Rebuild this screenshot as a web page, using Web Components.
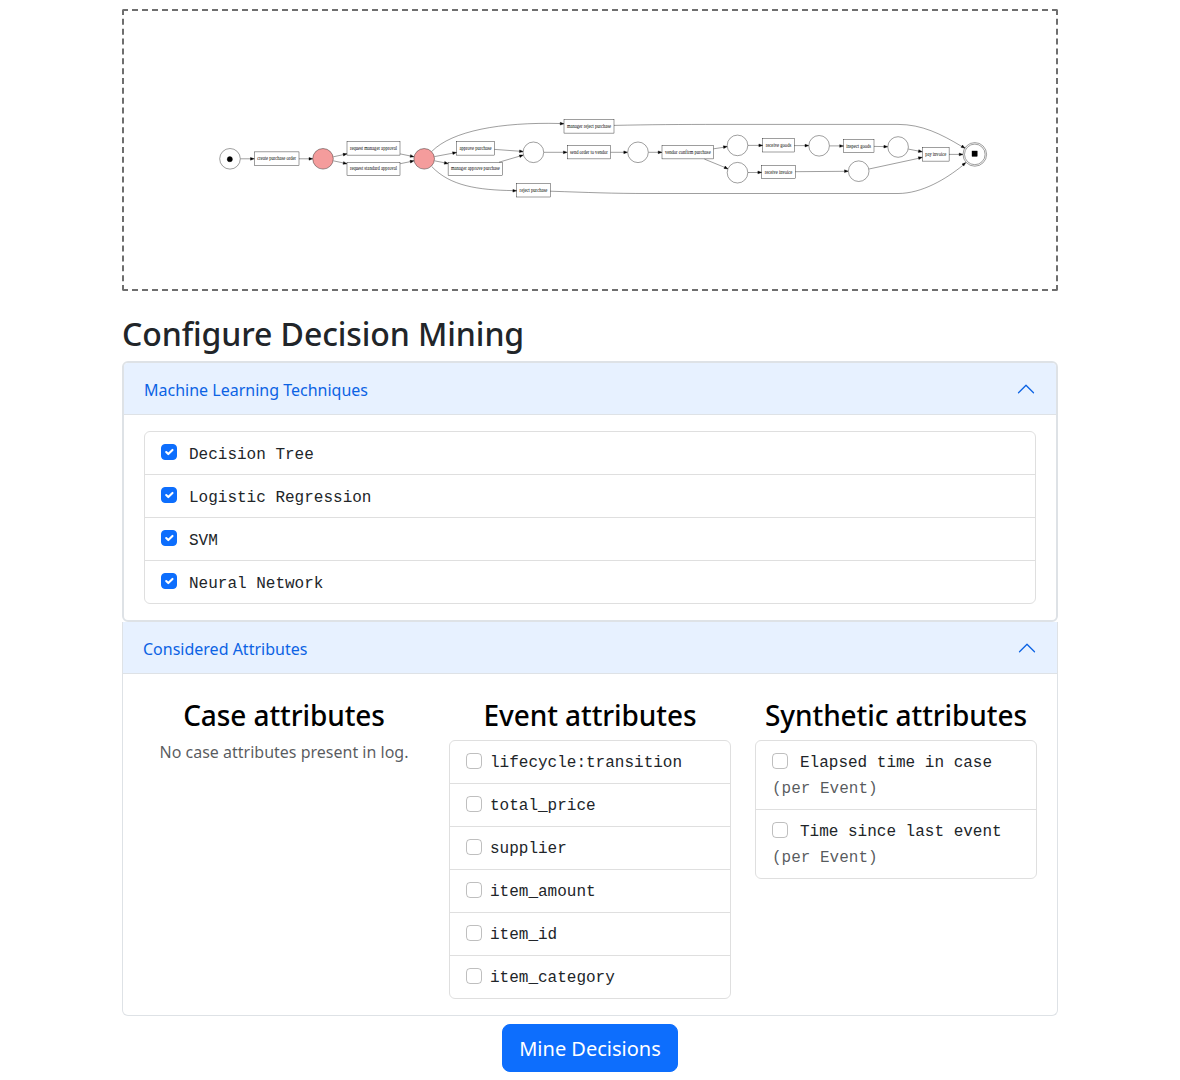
<!DOCTYPE html>
<html lang="en">
<head>
<meta charset="utf-8">
<title>Decision Mining</title>
<style>
html,body{margin:0;background:#fff}
body{font:16px/1.5 "Noto Sans",sans-serif;color:#212529;height:1080px;overflow:hidden}
</style>
</head>
<body>
<decision-app></decision-app>
<script>
const define = (name, html, setup) => customElements.define(name, class extends HTMLElement {
  constructor() {
    super();
    this.attachShadow({mode: 'open'});
  }
  connectedCallback() {
    const t = document.createElement('template');
    t.innerHTML = html;
    this.shadowRoot.replaceChildren(t.content.cloneNode(true));
    if (setup) setup(this, this.shadowRoot);
  }
});

/* Petri net: places [cx, cy, fill], transitions [x1, x2, y, label], arcs [path, arrow tip x, tip y, angle] */
const places = [
  [230,158.8,'#fff'],[323,158.8,'#f49c9c'],[424.2,158.8,'#f49c9c'],[533.4,152.3,'#fff'],[638,152.3,'#fff'],
  [737.5,145.4,'#fff'],[737.5,172.7,'#fff'],[819.1,145.8,'#fff'],[858.7,171.2,'#fff'],[898.1,147,'#fff']
];
const transitions = [
  [254.3,299,151.9,'create purchase order'],[347,400,141.8,'request manager approval'],
  [347,400,162.2,'request standard approval'],[564,614,119.8,'manager reject purchase'],
  [456.5,494.5,141.8,'approve purchase'],[448.1,502.7,162.2,'manager approve purchase'],
  [516.7,550.3,183.7,'reject purchase'],[567.2,610.7,145.6,'send order to vendor'],
  [662,713.6,145.6,'vendor confirm purchase'],[762.8,794.2,138.7,'receive goods'],
  [761.8,795.3,165.3,'receive invoice'],[843.3,874,139.4,'inspect goods'],[922.3,949.1,147.8,'pay invoice']
];
const arcs = [
  ['M240.5 158.8H251',254.3,158.8,0],['M299 158.8H309',312.8,158.8,0],
  ['M333.3 156.8L343.6 154.6',347,153.8,-13],['M333.3 160.8L343.6 163',347,163.8,13],
  ['M400.2 153.9L410.5 156',414,156.8,13],['M400.2 163.7L410.5 161.6',414,160.8,-13],
  ['M432 151.2C452 131 500 122 560 123.5',564,123.8,2],
  ['M434.4 156.6L452.8 153.2',456.5,152.5,-10],['M434.4 160.8L444.6 162.8',448.2,163.6,12],
  ['M431.8 166.6C450 186 478 190 513 190.6',516.7,190.8,1],
  ['M494.5 149.4L519.5 151.2',523.3,151.6,5],['M499 162.2L519.5 156.2',523.3,155.1,-17],
  ['M543.8 152.3H563.5',567.2,152.3,0],['M610.7 152.3H624',627.6,152.3,0],
  ['M648.5 152.3H658.3',662,152.3,0],['M713.6 148.8L723.6 147.3',727.3,146.6,-8],
  ['M704.4 159.1L724.5 167.3',728,168.9,26],['M748 145.4H759',762.7,145.4,0],
  ['M748 172.5H758',761.7,172.4,0],['M794.2 145.6H805',808.8,145.6,0],
  ['M829.5 145.9H839.8',843.5,146,0],['M795.3 171.7L844.5 171.3',848.3,171.2,0],
  ['M874 146.4L884 146.6',887.7,146.7,1],['M908.4 149.1L918.7 151.1',922.3,151.8,11],
  ['M869 169L918.7 158.3',922.3,157.3,-13],['M949 154.4H959.3',963,154.4,0],
  ['M614 125.4C650 124.6 680 124.4 720 124.4H898C922 124.4 941 134 961.5 146.3',965,148.2,32],
  ['M550.3 191.2C590 192.5 610 193.5 650 193.5H898C922 193.5 946 179 962.8 165.4',965.8,162.6,-40]
];
define('petri-net', `
<style>
:host{display:block;box-sizing:border-box;height:282px;border:2px dashed #6e6e6e;border-radius:2px}
svg{display:block;width:932px;height:278px}
text{font:5.13px "Liberation Serif",serif;fill:#000;text-anchor:middle}
</style>
<svg viewBox="124 11 932 278" fill="none" stroke="#000" stroke-width=".38">${
  arcs.map(([d,x,y,a]) => `<path d="${d}"/><path d="M0 0L-3.8 -1.35V1.35Z" fill="#000" transform="translate(${x} ${y}) rotate(${a})"/>`).join('')
}${
  places.map(([x,y,f]) => `<circle cx="${x}" cy="${y}" r="10.3" fill="${f}"/>`).join('')
}<circle cx="974.8" cy="154.4" r="10.3"/><circle cx="974.8" cy="154.4" r="11.8"/>
<circle cx="229.8" cy="159.2" r="2.6" fill="#000"/><rect x="972" y="151" width="5.2" height="5.4" fill="#000"/>${
  transitions.map(([a,b,y,l]) => `<rect x="${a}" y="${y}" width="${b-a}" height="13.3"/><text stroke="none" x="${(a+b)/2}" y="${y+8.2}" textLength="${b-a-5.8}" lengthAdjust="spacingAndGlyphs">${l}</text>`).join('')
}</svg>`);

define('accordion-panel', `
<style>
:host{display:block}
header{display:flex;align-items:center;justify-content:space-between;box-sizing:border-box;height:52px;padding:0 20px;background:#e7f1ff;color:#0c63e4;line-height:20px;box-shadow:inset 0 -1px 0 #dee2e6;border-radius:var(--head-radius,0)}
slot[name=title]{display:block;padding-top:1px}
svg{width:20px;height:20px;display:block;transform:rotate(180deg)}
div{padding:16px 20px}
</style>
<header><slot name="title"></slot><svg viewBox="0 0 16 16" fill="#0c63e4"><path fill-rule="evenodd" d="M1.646 4.646a.5.5 0 0 1 .708 0L8 10.293l5.646-5.647a.5.5 0 0 1 .708.708l-6 6a.5.5 0 0 1-.708 0l-6-6a.5.5 0 0 1 0-.708z"/></svg></header>
<div><slot></slot></div>`);

define('option-list', `
<style>
:host{display:flex;flex-direction:column;border:1px solid #dfdfdf;border-radius:6px}
::slotted(:not(:first-child)){border-top:1px solid #dfdfdf}
</style><slot></slot>`);

define('check-option', `
<style>
:host{display:block;box-sizing:border-box;padding:8px 16px;font-family:"Liberation Mono",monospace;line-height:26px}
.row{display:flex;align-items:flex-start;height:26px;gap:var(--gap,8px)}
i{box-sizing:border-box;width:16px;height:16px;margin-top:4px;border:1px solid rgba(0,0,0,.25);border-radius:4px;flex:none}
:host([checked]) i{background:#0d6efd;border-color:#0d6efd}
svg{display:none;width:14px;height:14px}
:host([checked]) svg{display:block}
.text{margin-top:1px;white-space:pre}
:host([checked]) .text{margin-top:2px}
small{display:block;font-size:16px;color:rgba(33,37,41,.75);margin:1px 0 -1px}
small:empty{display:none}
</style>
<div class="row"><i><svg viewBox="0 0 20 20"><path fill="none" stroke="#fff" stroke-linecap="round" stroke-linejoin="round" stroke-width="3" d="m6 10 3 3 6-6"/></svg></i><span class="text"><slot></slot></span></div><small></small>`,
(el, root) => { root.querySelector('small').textContent = el.getAttribute('note') || ''; });

define('attribute-column', `
<style>
:host{display:block;flex:1 1 0;min-width:0;text-align:center}
h3{margin:9px 0 7px;font-size:28px;font-weight:500;line-height:33.6px;letter-spacing:-.08px;color:#000;white-space:nowrap}
.body{text-align:left}
</style><h3><slot name="title"></slot></h3><div class="body"><slot></slot></div>`);

define('primary-button', `
<style>
:host{display:block}
button{display:block;margin:0;box-sizing:border-box;height:48px;border:1px solid #0d6efd;border-radius:8px;padding:9px 16px 7px;background:#0d6efd;color:#fff;font:20px/30px "Noto Sans",sans-serif}
</style><button><slot></slot></button>`);

define('decision-app', `
<style>
:host{display:block;width:936px;margin:0 auto;padding-top:9px}
h2{margin:24px 0 8px;font-size:32px;font-weight:500;line-height:38.4px;letter-spacing:-.09px}
.inner{border:2px solid #dee2e6;border-radius:6px;--head-radius:4px 4px 0 0}
.outer{border:1px solid #dee2e6;border-top:0;border-radius:0 0 6px 6px}
.techniques{--gap:12px}
.wide{--gap:12px}
.cols{display:flex;gap:24px}
p{margin:0;text-align:center;color:rgba(33,37,41,.75)}
.actions{display:flex;justify-content:center;margin-top:8px}
</style>
<petri-net></petri-net>
<h2>Configure Decision Mining</h2>
<section class="inner"><accordion-panel><span slot="title">Machine Learning Techniques</span>
<option-list class="techniques"><check-option checked>Decision Tree</check-option><check-option checked>Logistic Regression</check-option><check-option checked>SVM</check-option><check-option checked>Neural Network</check-option></option-list>
</accordion-panel></section>
<section class="outer"><accordion-panel><span slot="title">Considered Attributes</span>
<div class="cols">
<attribute-column><span slot="title">Case attributes</span><p>No case attributes present in log.</p></attribute-column>
<attribute-column><span slot="title">Event attributes</span><option-list><check-option>lifecycle:transition</check-option><check-option>total_price</check-option><check-option>supplier</check-option><check-option>item_amount</check-option><check-option>item_id</check-option><check-option>item_category</check-option></option-list></attribute-column>
<attribute-column><span slot="title">Synthetic attributes</span><option-list class="wide"><check-option note="(per Event)">Elapsed time in case</check-option><check-option note="(per Event)">Time since last event</check-option></option-list></attribute-column>
</div></accordion-panel></section>
<div class="actions"><primary-button>Mine Decisions</primary-button></div>`);
</script>
</body>
</html>
